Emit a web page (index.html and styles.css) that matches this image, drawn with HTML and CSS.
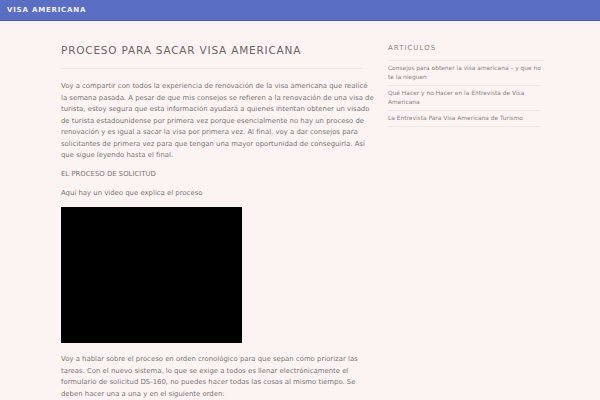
FILE: index.html
```html
<!DOCTYPE html>
<html lang="es">
<head>
<meta charset="utf-8">
<title>Visa Americana</title>
<link rel="stylesheet" href="styles.css">
</head>
<body>
<header class="topbar">
  <div class="brand">VISA AMERICANA</div>
</header>
<div class="wrap">
  <main class="content">
    <h1 class="entry-title">PROCESO PARA SACAR VISA AMERICANA</h1>
    <p>Voy a compartir con todos la experiencia de renovación de la visa americana que realicé la semana pasada. A pesar de que mis consejos se refieren a la renovación de una visa de turista, estoy segura que esta información ayudará a quienes intentan obtener un visado de turista estadounidense por primera vez porque esencialmente no hay un proceso de renovación y es igual a sacar la visa por primera vez. Al final, voy a dar consejos para solicitantes de primera vez para que tengan una mayor oportunidad de conseguirla. Así que sigue leyendo hasta el final.</p>
    <p>EL PROCESO DE SOLICITUD</p>
    <p>Aquí hay un video que explica el proceso</p>
    <div class="video"></div>
    <p>Voy a hablar sobre el proceso en orden cronológico para que sepan cómo priorizar las tareas. Con el nuevo sistema, lo que se exige a todos es llenar electrónicamente el formulario de solicitud DS-160, no puedes hacer todas las cosas al mismo tiempo. Se deben hacer una a una y en el siguiente orden:</p>
  </main>
  <aside class="sidebar">
    <h2 class="widget-title">ARTICULOS</h2>
    <ul class="links">
      <li><a href="#">Consejos para obtener la visa americana – y que no te la nieguen</a></li>
      <li><a href="#">Qué Hacer y no Hacer en la Entrevista de Visa Americana</a></li>
      <li><a href="#">La Entrevista Para Visa Americana de Turismo</a></li>
    </ul>
  </aside>
</div>
</body>
</html>
```
FILE: styles.css
```css
html, body {
  margin: 0;
  padding: 0;
}
body {
  background: #fcf4f2;
  font-family: "DejaVu Sans", Verdana, sans-serif;
  color: #7a7474;
}
.topbar {
  height: 20px;
  background: #5a6ec4;
  border-bottom: 1px solid #4b5cae;
  display: flex;
  align-items: center;
  padding-left: 7px;
}
.brand {
  color: #f4f4fb;
  font-weight: bold;
  font-size: 7px;
  letter-spacing: 0.8px;
}
.wrap {
  margin-left: 61px;
  display: flex;
  gap: 14px;
  padding-top: 23px;
}
.content {
  width: 313px;
  flex: none;
}
.entry-title {
  margin: 0 12px 12px 0;
  font-weight: normal;
  font-size: 10.5px;
  letter-spacing: 0.8px;
  color: #6b6565;
  padding-bottom: 12px;
  border-bottom: 1px solid #efe5e3;
}
.content p {
  font-size: 6.9px;
  line-height: 11.5px;
  margin: 0 0 7.5px;
}
.video {
  width: 181px;
  height: 136px;
  background: #000;
  margin: 0 0 11px;
}
.sidebar {
  width: 156px;
  flex: none;
}
.widget-title {
  margin: 0;
  font-weight: normal;
  font-size: 7px;
  letter-spacing: 1px;
  color: #8a8484;
  padding-bottom: 8px;
  border-bottom: 1px solid #efe5e3;
}
.links {
  list-style: none;
  margin: 0;
  padding: 0;
  width: 152px;
}
.links li {
  padding: 3px 0;
  border-bottom: 1px solid #efe5e3;
  font-size: 5.9px;
  line-height: 9px;
}
.links a {
  display: block;
  margin-right: -8px;
  color: #8a8282;
  text-decoration: none;
}
```
